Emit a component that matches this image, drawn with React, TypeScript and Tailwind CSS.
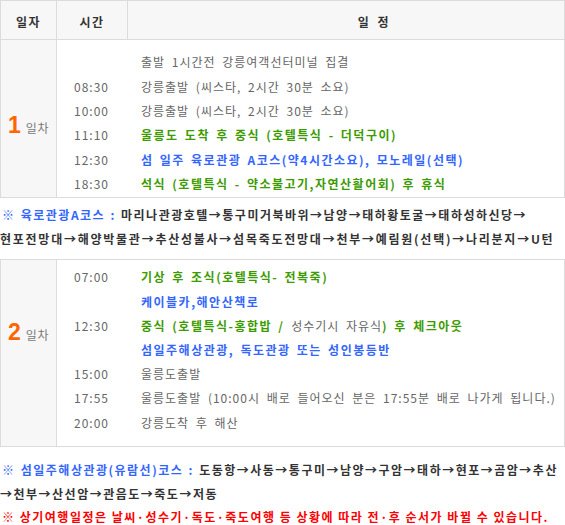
import React from "react";

const green = "text-[#3c9b00] font-bold tracking-[1.5px] [word-spacing:2px]";
const blue = "text-[#3366ff] font-bold tracking-[1.5px] [word-spacing:2px]";

type Item = { time?: string; text: React.ReactNode };

const day1: Item[] = [
  { text: "출발 1시간전 강릉여객선터미널 집결" },
  { time: "08:30", text: "강릉출발 (씨스타, 2시간 30분 소요)" },
  { time: "10:00", text: "강릉출발 (씨스타, 2시간 30분 소요)" },
  { time: "11:10", text: <span className={green}>울릉도 도착 후 중식 (호텔특식 - 더덕구이)</span> },
  { time: "12:30", text: <span className={blue}>섬 일주 육로관광 A코스(약4시간소요), 모노레일(선택)</span> },
  { time: "18:30", text: <span className={green}>석식 (호텔특식 - 약소불고기,자연산활어회) 후 휴식</span> },
];

const day2: Item[] = [
  { time: "07:00", text: <span className={green}>기상 후 조식(호텔특식- 전복죽)</span> },
  { text: <span className={blue}>케이블카,해안산책로</span> },
  {
    time: "12:30",
    text: (
      <>
        <span className={green}>중식 (호텔특식-홍합밥 /</span>
        <span> 성수기시 자유식</span>
        <span className={green}>) 후 체크아웃</span>
      </>
    ),
  },
  { text: <span className={blue}>섬일주해상관광, 독도관광 또는 성인봉등반</span> },
  { time: "15:00", text: "울릉도출발" },
  { time: "17:55", text: "울릉도출발 (10:00시 배로 들어오신 분은 17:55분 배로 나가게 됩니다.)" },
  { time: "20:00", text: "강릉도착 후 해산" },
];

const DayLabel = ({ n }: { n: string }) => (
  <div className="flex items-baseline gap-[5px]">
    <span className="text-[23px] font-bold text-[#ff6600] font-['Liberation_Sans',sans-serif] leading-none tracking-normal">{n}</span>
    <span className="text-[12px] text-[#777] tracking-[0.5px]">일차</span>
  </div>
);

const Rows = ({ items, rowH }: { items: Item[]; rowH: string }) => (
  <div className="flex-1">
    {items.map((it, i) => (
      <div key={i} className={`flex ${rowH} items-center`}>
        <div className="w-[71px] shrink-0 text-center text-[#666] tracking-[1px]">{it.time}</div>
        <div className="pl-[14px] whitespace-nowrap text-[#666]">{it.text}</div>
      </div>
    ))}
  </div>
);

export default function App() {
  return (
    <div className="w-[565px] h-[525px] bg-white text-[12px] tracking-[1px] [word-spacing:3px] font-['Noto_Sans_CJK_KR',sans-serif] overflow-hidden">
      <div className="border border-[#dcdcdc]">
        <div className="flex h-[39px] bg-[#f7f7f7] border-b border-[#dcdcdc] font-bold text-[#333] tracking-[1.5px]">
          <div className="w-[56px] border-r border-[#dcdcdc] flex items-center justify-center pt-[4px]">일자</div>
          <div className="w-[71px] border-r border-[#dcdcdc] flex items-center justify-center pt-[4px]">시간</div>
          <div className="flex-1 flex items-center justify-center pl-[56px] pt-[4px]">일 정</div>
        </div>
        <div className="flex">
          <div className="w-[56px] shrink-0 bg-[#f7f7f7] border-r border-[#dcdcdc] flex items-center justify-center pt-[13px]">
            <DayLabel n="1" />
          </div>
          <div className="flex-1 pt-[10px] pb-[1px] -ml-[1px]">
            <Rows items={day1} rowH="h-[24.4px]" />
          </div>
        </div>
      </div>

      <div className="pt-[5px] pb-[8px] leading-[24px] font-bold text-[#333] whitespace-nowrap tracking-[1.5px] [word-spacing:1px]">
        <div className="pl-[2px]">
          <span className="text-[#3366ff]">※ 육로관광A코스 : </span>
          마리나관광호텔→통구미거북바위→남양→태하황토굴→태하성하신당→
        </div>
        <div className="tracking-[1.75px]">현포전망대→해양박물관→추산성불사→섬목죽도전망대→천부→예림원(선택)→나리분지→U턴</div>
      </div>

      <div className="border border-[#dcdcdc]">
        <div className="flex">
          <div className="w-[56px] shrink-0 bg-[#f7f7f7] border-r border-[#dcdcdc] flex items-center justify-center pb-[42px]">
            <DayLabel n="2" />
          </div>
          <div className="flex-1 pt-[5px] pb-[11px] -ml-[1px]">
            <Rows items={day2} rowH="h-[24.2px]" />
          </div>
        </div>
      </div>

      <div className="pt-[11px] leading-[24px] font-bold text-[#333] whitespace-nowrap tracking-[1.5px] [word-spacing:1px]">
        <div className="pl-[2px]">
          <span className="text-[#3366ff]">※ 섬일주해상관광(유람선)코스 : </span>
          도동항→사동→통구미→남양→구암→태하→현포→곰암→추산
        </div>
        <div>→천부→산선암→관음도→죽도→저동</div>
        <div className="pl-[2px] text-[#ff0000] leading-[22px] [word-spacing:0px]">
          ※ 상기여행일정은 날씨·성수기·독도·죽도여행 등 상황에 따라 전·후 순서가 바뀔 수 있습니다.
        </div>
      </div>
    </div>
  );
}
